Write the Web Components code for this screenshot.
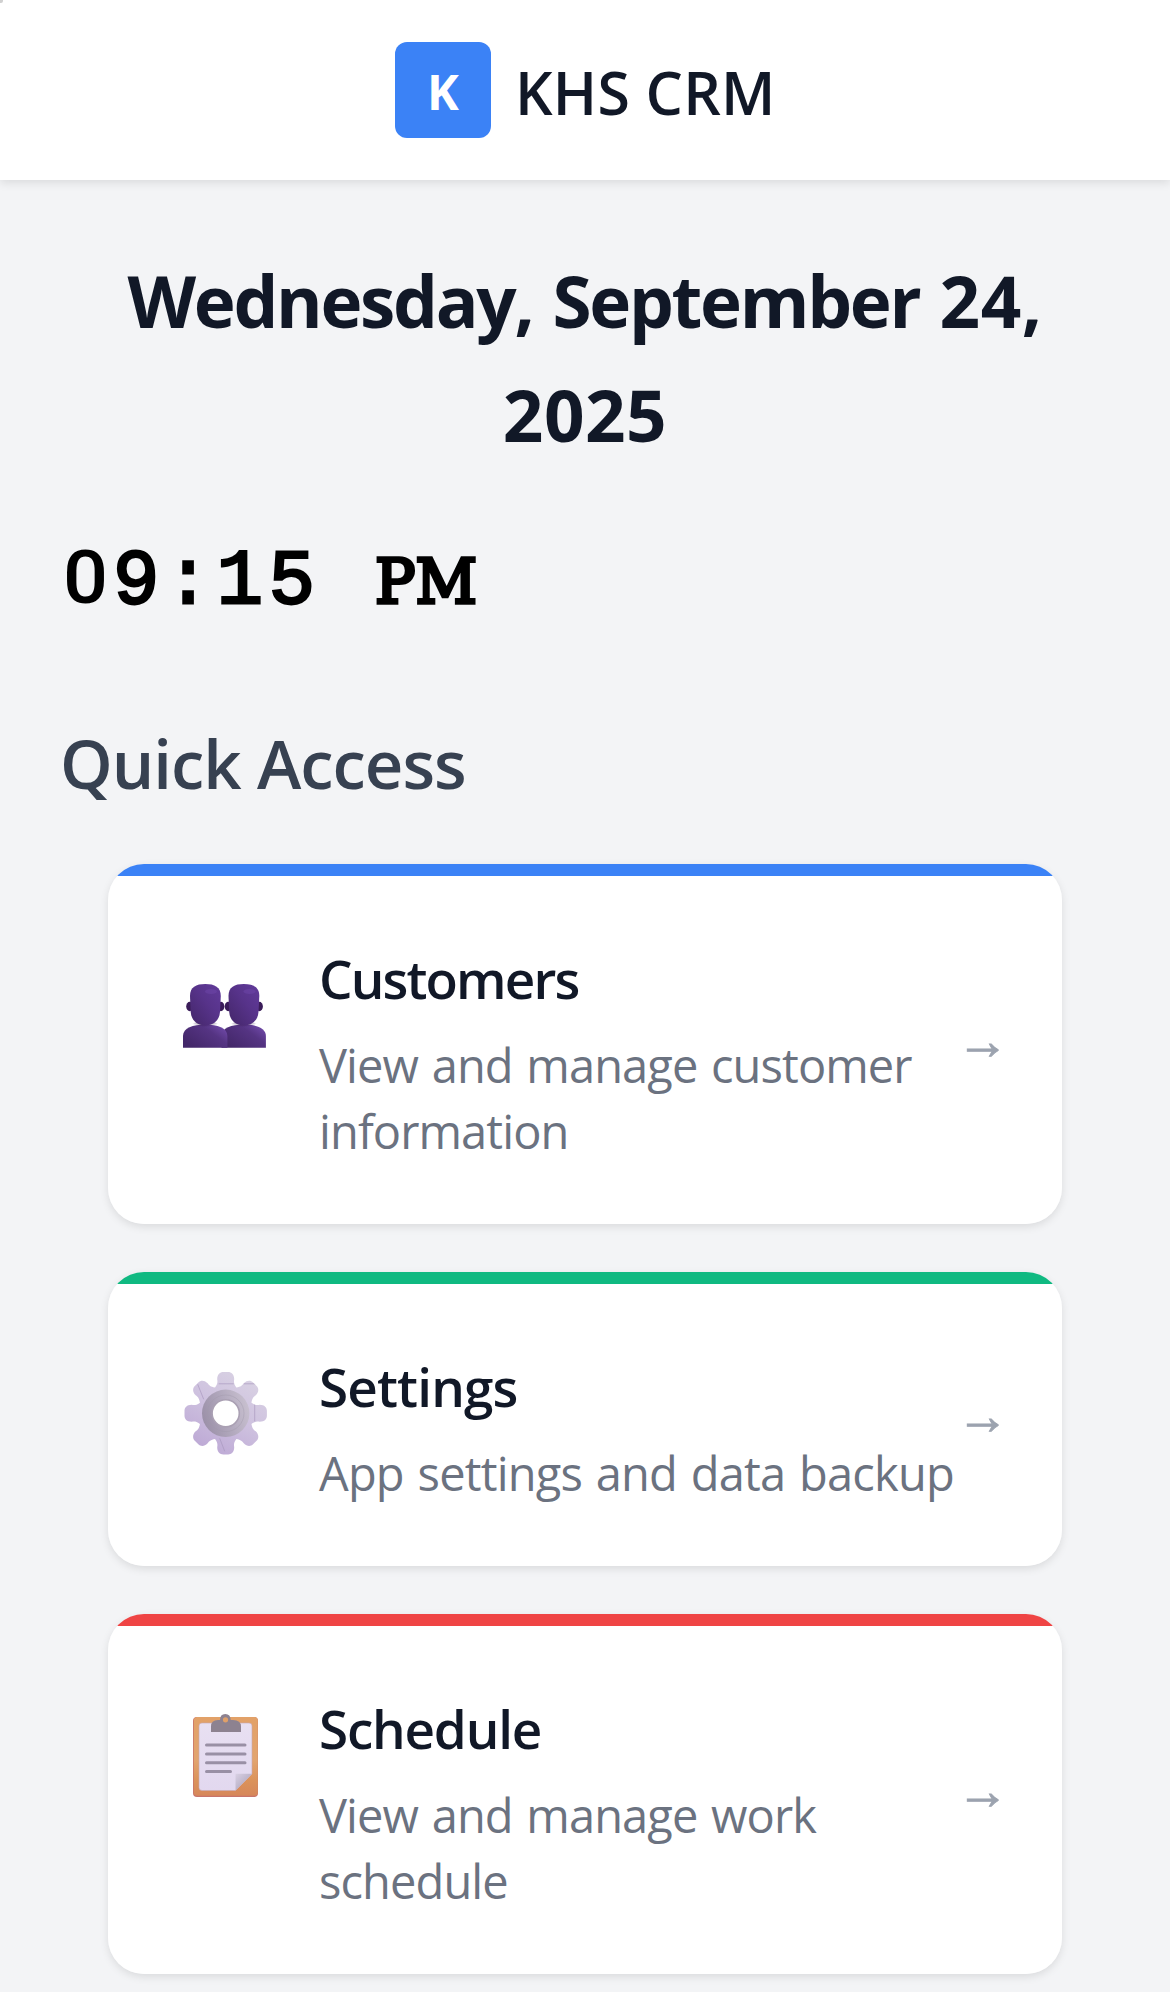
<!DOCTYPE html>
<html lang="en">
<head>
<meta charset="utf-8">
<title>KHS CRM</title>
<style>
  html, body { margin: 0; height: 100%; }
  body { background: #f3f4f6; overflow: hidden; font-family: "Open Sans", "Noto Sans", sans-serif; color: #111827; }
</style>
</head>
<body>
<crm-app>
  <crm-header slot="header" mark="K">KHS CRM</crm-header>
  <crm-date>Wednesday, September <span>24,</span> <span>2025</span></crm-date>
  <crm-clock></crm-clock>
  <crm-section heading="Quick Access">
    <crm-card style="--accent:#3b82f6;--h:360px;--track:-1.85px">
      <icon-customers slot="icon"></icon-customers>
      <span slot="title">Customers</span>
      View and manage customer information
    </crm-card>
    <crm-card style="--accent:#10b981;--h:294px;--track:-.85px;--desc-track:-.8px">
      <icon-settings slot="icon"></icon-settings>
      <span slot="title">Settings</span>
      App settings and data backup
    </crm-card>
    <crm-card style="--accent:#ef4444;--h:360px;--track:-1.2px">
      <icon-schedule slot="icon"></icon-schedule>
      <span slot="title">Schedule</span>
      View and manage work schedule
    </crm-card>
  </crm-section>
</crm-app>
<script>
const define = (name, html) => customElements.define(name, class extends HTMLElement {
  constructor() {
    super();
    const t = document.createElement('template');
    t.innerHTML = html.trim();
    this.attachShadow({ mode: 'open' }).append(t.content.cloneNode(true));
  }
  connectedCallback() {
    this.shadowRoot.querySelectorAll('[data-attr]').forEach(n => { n.textContent = this.getAttribute(n.dataset.attr); });
  }
});

define('crm-app', `
  <style>
    :host { display: flex; flex-direction: column; height: 1992px; overflow: hidden; position: relative; }
    main { display: flex; flex-direction: column; padding: 64px 60px 0; }
    i { position: absolute; left: 0; top: 0; width: 3px; height: 3px; background: #d0d0d0; border-bottom-right-radius: 2px; }
  </style>
  <slot name="header"></slot><main><slot></slot></main><i></i>`);

define('crm-header', `
  <style>
    :host { display: flex; flex: none; height: 180px; align-items: center; justify-content: center; gap: 24px;
      background: #fff; box-shadow: 0 3px 9px rgba(0,0,0,.1); }
    .mark { display: flex; align-items: center; justify-content: center; width: 96px; height: 96px; border-radius: 12px;
      background: #3b82f6; color: #fff; font: 700 48px/60px "Open Sans"; padding-top: 4px; box-sizing: border-box; }
    .name { width: 260px; font: 600 59px/80px "Open Sans"; padding-top: 4px; white-space: nowrap; letter-spacing: .2px; }
  </style>
  <div class="mark" data-attr="mark"></div><div class="name"><slot></slot></div>`);

define('crm-date', `
  <style>
    :host { display: block; padding: 0 40px; text-align: center; font: 700 71px/114px "Open Sans"; letter-spacing: -2.3px; word-spacing: 4px; }
    ::slotted(span) { letter-spacing: .5px; }
  </style><slot></slot>`);

define('crm-clock', `
  <style>
    :host { display: block; margin-top: 61px; height: 100px; white-space: pre; color: #000;
      font: 400 77px/100px "Liberation Mono"; letter-spacing: 5.7px; -webkit-text-stroke: 2.8px #000; }
    .z { font-family: Roboto; font-weight: 500; font-size: 74px; line-height: 60px; display: inline-block; width: 53px; text-align: center; letter-spacing: 0; -webkit-text-stroke: 0; transform: translateX(-1px) scaleX(1.07); }
    .m { font-family: "DejaVu Serif"; font-size: 62px; line-height: 60px; font-weight: 400; letter-spacing: 0; display: inline-block; margin-left: 2px; transform: scaleX(.97); transform-origin: 0 0; -webkit-text-stroke: 3.6px #000; }
  </style><span class="z">0</span>9:15 <span class="m">PM</span>`);

define('crm-section', `
  <style>
    :host { display: block; margin-top: 80px; }
    h2 { margin: 0 0 51px; font: 600 67px/100px "Open Sans"; color: #374151; letter-spacing: -1px; }
    div { display: flex; flex-direction: column; gap: 48px; padding: 0 48px; }
  </style><h2 data-attr="heading"></h2><div><slot></slot></div>`);

define('crm-card', `
  <style>
    :host { display: flex; box-sizing: border-box; height: var(--h); border-radius: 36px; padding-left: 67px;
      background: linear-gradient(var(--accent) 12px, #fff 12px); box-shadow: 0 3px 9px rgba(0,0,0,.1); }
    .icon { width: 144px; padding-top: 92px; flex: none; }
    .text { width: 646px; padding-top: 75px; flex: none; }
    .title { font: 600 53px/80px "Open Sans"; color: #111827; letter-spacing: var(--track); }
    .desc { margin-top: 13px; font: 400 47px/66px "Open Sans"; color: #6b7280; letter-spacing: var(--desc-track, -.9px); word-spacing: 2.3px; }
    .arrow { align-self: center; font: 400 52px/50px "Liberation Sans"; color: #9ca3af; margin: -7px 0 0 -8.5px; -webkit-text-stroke: 1px #9ca3af; }
  </style>
  <div class="icon"><slot name="icon"></slot></div>
  <div class="text"><div class="title"><slot name="title"></slot></div><div class="desc"><slot></slot></div></div>
  <div class="arrow">→</div>`);

const svgStyle = '<style>:host{display:block;width:100px;height:100px}svg{display:block}</style>';

define('icon-customers', svgStyle + `
  <svg width="100" height="100" viewBox="0 0 100 100">
    <defs>
      <linearGradient id="h" x1="0" y1="1" x2="1" y2="0"><stop offset="0" stop-color="#432668"/><stop offset=".55" stop-color="#57338a"/><stop offset="1" stop-color="#623b9b"/></linearGradient>
      <linearGradient id="b" x1="0" y1=".7" x2="1" y2="0"><stop offset="0" stop-color="#432769"/><stop offset=".6" stop-color="#553483"/><stop offset="1" stop-color="#7850b4"/></linearGradient>
      <radialGradient id="n" cx=".5" cy="0" r=".5"><stop offset="0" stop-color="#301447" stop-opacity=".9"/><stop offset="1" stop-color="#301447" stop-opacity="0"/></radialGradient>
      <g id="p">
        <path d="M8 91.7V80C8 72 18 68.5 30.2 68.5S52.4 72 52.4 80v11.7z" fill="url(#b)"/>
        <ellipse cx="30.2" cy="71" rx="15" ry="6" fill="url(#n)"/>
        <ellipse cx="14.7" cy="50.5" rx="3.5" ry="4.7" fill="#3a1c59"/><ellipse cx="45.9" cy="50.5" rx="3.5" ry="4.7" fill="#3a1c59"/>
        <path d="M15 40C15 31 21 28 30.3 28S45.8 31 45.8 40L45 56C44.5 64 38.500 69.500 30.300 69.500S16.200 64 15.700 56Z" fill="url(#h)"/>
        <ellipse cx="36" cy="35.500" rx="6" ry="2.500" fill="#7149ad" opacity=".45"/>
      </g>
    </defs>
    <use href="#p" x="38.500"/><use href="#p"/>
  </svg>`);

define('icon-settings', svgStyle + `
  <svg width="100" height="100" viewBox="0 0 100 100">
    <defs>
      <linearGradient id="g" gradientUnits="userSpaceOnUse" x1="25" y1="-38" x2="-20" y2="38"><stop offset="0" stop-color="#d9d2e3"/><stop offset=".5" stop-color="#cec1df"/><stop offset="1" stop-color="#bda9d5"/></linearGradient>
      <linearGradient id="r" x1="0" y1=".6" x2="1" y2=".3"><stop offset="0" stop-color="#9b90a8"/><stop offset=".55" stop-color="#b4abbf"/><stop offset="1" stop-color="#c9c1d0"/></linearGradient>
      <path id="t" d="M-12-24C-8-29-8-31-8.500-34C-8.500-39-5.500-41.200-2.500-41.200H2.500C5.500-41.200 8.500-39 8.500-34C8-31 8-29 12-24Z"/>
      <clipPath id="c"><use href="#t"/><use href="#t" transform="rotate(45)"/><use href="#t" transform="rotate(90)"/><use href="#t" transform="rotate(135)"/><use href="#t" transform="rotate(180)"/><use href="#t" transform="rotate(225)"/><use href="#t" transform="rotate(270)"/><use href="#t" transform="rotate(315)"/><circle r="27.500"/></clipPath>
    </defs>
    <g transform="translate(50.700 49.300)">
      <g clip-path="url(#c)"><rect x="-45" y="-45" width="90" height="90" fill="url(#g)"/>
        <path d="M-28-29L-22-14M-7-29.500H8M18-29.500H30M29-10V8M-6 25L-1 38" stroke="#a897bd" stroke-width="1" fill="none" opacity=".65"/></g>
      <circle r="23.700" fill="url(#r)"/>
      <circle r="18.300" fill="none" stroke="#a198aa" stroke-width=".8" opacity=".5"/>
      <circle r="13.600" fill="#fff" stroke="#aaa0b3" stroke-width="1.600"/>
    </g>
  </svg>`);

define('icon-schedule', svgStyle + `
  <svg width="100" height="100" viewBox="0 0 100 100">
    <defs>
      <linearGradient id="w" x1="0" y1="0" x2="0" y2="1"><stop offset="0" stop-color="#e2a168"/><stop offset=".55" stop-color="#e2a46f"/><stop offset=".8" stop-color="#db935b"/><stop offset="1" stop-color="#d6875a"/></linearGradient>
      <linearGradient id="q" x1="0" y1="0" x2="0" y2="1"><stop offset="0" stop-color="#e8e0f2"/><stop offset="1" stop-color="#e2d8ef"/></linearGradient>
      <linearGradient id="f" x1="0" y1="0" x2="1" y2="1"><stop offset="0" stop-color="#d9d1e4"/><stop offset=".5" stop-color="#beb5cb"/></linearGradient>
    </defs>
    <rect x="18" y="11" width="65" height="80" rx="4" fill="#c8746a"/>
    <rect x="18.800" y="11" width="64" height="78.800" rx="3.500" fill="url(#w)"/>
    <path d="M27 17H74Q77 17 77 20V68L60.500 84.500H27Q24 84.500 24 81.500V20Q24 17 27 17Z" fill="url(#q)" stroke="#c8a9b4" stroke-width=".6"/>
    <path d="M60.500 67.700H77L60.500 84.500Z" fill="url(#f)"/>
    <path d="M36 26V20.500Q36 14 43 14H45Q45 8 50.300 8T55.700 14H58Q66 14 66 20.500V26Z" fill="#8d8290"/>
    <circle cx="50.500" cy="13.800" r="2.600" fill="#e0a069"/>
    <path d="M31.500 39H70M31.500 47.900H70M31.500 56.700H70M31.500 65.600H55.500" stroke="#9990a5" stroke-width="3" stroke-linecap="round"/>
  </svg>`);
</script>
</body>
</html>
